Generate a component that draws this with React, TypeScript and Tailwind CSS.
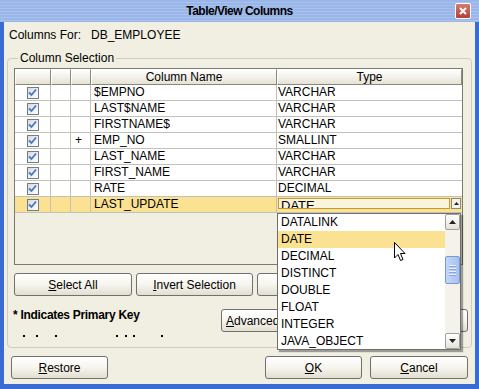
import React from 'react';

const rows = [
  { name: '$EMPNO', type: 'VARCHAR', key: '' },
  { name: 'LAST$NAME', type: 'VARCHAR', key: '' },
  { name: 'FIRSTNAME$', type: 'VARCHAR', key: '' },
  { name: 'EMP_NO', type: 'SMALLINT', key: '+' },
  { name: 'LAST_NAME', type: 'VARCHAR', key: '' },
  { name: 'FIRST_NAME', type: 'VARCHAR', key: '' },
  { name: 'RATE', type: 'DECIMAL', key: '' },
  { name: 'LAST_UPDATE', type: 'DATE', key: '', selected: true },
];

const types = ['DATALINK', 'DATE', 'DECIMAL', 'DISTINCT', 'DOUBLE', 'FLOAT', 'INTEGER', 'JAVA_OBJECT'];

function Check() {
  return (
    <div className="w-[12px] h-[12px] border border-[#6e7d8e] bg-gradient-to-br from-[#dcdcd4] to-white flex items-center justify-center">
      <svg width="9" height="9" viewBox="0 0 9 9">
        <path d="M1 4.5 L3.5 7 L8 1.5" fill="none" stroke="#4a74c8" strokeWidth="1.8" />
      </svg>
    </div>
  );
}

function Btn({ children, className = '' }: { children?: React.ReactNode; className?: string }) {
  return (
    <div
      className={`h-[23px] flex items-center justify-center rounded-[3px] border border-[#707070] bg-gradient-to-b from-white via-[#f6f5ee] to-[#e2dfd0] text-[12px] text-black ${className}`}
    >
      {children}
    </div>
  );
}

function Arrow({ up }: { up?: boolean }) {
  return (
    <div className="w-[15px] h-[16px] border border-[#a0a0a0] rounded-[2px] bg-gradient-to-b from-white to-[#e4e2d8] flex items-center justify-center">
      <svg width="7" height="4" viewBox="0 0 7 4">
        <path d={up ? 'M0 4 L3.5 0 L7 4 Z' : 'M0 0 L3.5 4 L7 0 Z'} fill="#222" />
      </svg>
    </div>
  );
}

export default function App() {
  return (
    <div className="relative w-[479px] h-[389px] flex flex-col bg-[#3a6bd2] font-['Liberation_Sans',Arial,sans-serif] text-black overflow-hidden select-none">
      {/* Title bar */}
      <div className="relative h-[22px] shrink-0 flex items-center justify-center bg-[repeating-linear-gradient(180deg,#9ab6e8_0px,#9ab6e8_2px,#a9c2ee_2px,#a9c2ee_3px)]">
        <span className="text-[12px] font-bold tracking-[-0.5px]">Table/View Columns</span>
        <div className="absolute right-[8px] top-[3px] w-[16px] h-[16px] rounded-[2px] border border-white bg-gradient-to-b from-[#d97a6a] to-[#b0403a] flex items-center justify-center">
          <svg width="8" height="8" viewBox="0 0 8 8">
            <path d="M1 1 L7 7 M7 1 L1 7" stroke="white" strokeWidth="2" />
          </svg>
        </div>
      </div>

      {/* Body */}
      <div className="flex-1 mx-[4px] mb-[5px] bg-[#f1efe2] flex flex-col">
        <div className="h-[12px] mt-[7px] ml-[5px] text-[12px] leading-[12px] whitespace-pre">Columns For:   DB_EMPLOYEE</div>

        <fieldset className="mx-[3px] mt-[11px] h-[296px] border border-[#cfccbd] rounded-[4px] px-[6px] pt-[4px]">
          <legend className="ml-[4px] px-[2px] text-[12px] leading-[12px]">Column Selection</legend>

          {/* Table */}
          <div className="w-[449px] h-[197px] border border-[#7a7a72] bg-[#f1efe2]">
            <div className="flex h-[16px] text-[12px] leading-[14px]">
              {[
                ['w-[36px]', ''],
                ['w-[20px]', ''],
                ['w-[20px]', ''],
                ['w-[186px]', 'Column Name'],
                ['w-[185px]', 'Type'],
              ].map(([w, t], i) => (
                <div
                  key={i}
                  className={`${w} h-[16px] text-center border-t border-l border-t-white border-l-white border-r border-b border-r-[#8a8878] border-b-[#8a8878] bg-gradient-to-b from-white to-[#e6e3d4]`}
                >
                  {t}
                </div>
              ))}
            </div>
            {rows.map((r, i) => (
              <div
                key={i}
                className={`flex h-[16px] text-[12px] leading-[15px] ${r.selected ? 'bg-[#fae292]' : 'bg-white'}`}
              >
                <div className="w-[36px] h-[16px] border-r border-b border-[#c4c2b8] flex items-center justify-center">
                  <Check />
                </div>
                <div className="w-[20px] h-[16px] border-r border-b border-[#c4c2b8]" />
                <div className="w-[20px] h-[16px] border-r border-b border-[#c4c2b8] pl-[4px]">{r.key}</div>
                <div className="w-[186px] h-[16px] border-r border-b border-[#c4c2b8] pl-[3px]">{r.name}</div>
                <div className="w-[185px] h-[16px] border-b border-[#c4c2b8] pl-[1px]">
                  {r.selected ? (
                    <div className="flex items-start pt-[1px] pr-[1px]">
                      <div className="w-[172px] h-[11px] border border-[#c49a2c] bg-[#f8f4de] overflow-hidden pl-[2px] text-[13px] leading-[14px]">
                        {r.type}
                      </div>
                      <div className="ml-[1px] w-[10px] h-[11px] border border-[#888] bg-[#f4f2ea] flex items-center justify-center">
                        <svg width="5" height="3" viewBox="0 0 5 3">
                          <path d="M0 3 L2.5 0 L5 3 Z" fill="#222" />
                        </svg>
                      </div>
                    </div>
                  ) : (
                    r.type
                  )}
                </div>
              </div>
            ))}
          </div>

          {/* Selection buttons */}
          <div className="flex gap-[4px] mt-[8px]">
            <Btn className="w-[118px]"><span><span className="underline">S</span>elect All</span></Btn>
            <Btn className="w-[117px]"><span><span className="underline">I</span>nvert Selection</span></Btn>
            <Btn className="w-[117px]" />
          </div>

          <div className="flex mt-[13px]">
            <div className="flex flex-col">
              <div className="text-[12px] leading-[14px] font-bold tracking-[-0.3px] -ml-[1px] mt-[-1px]">* Indicates Primary Key</div>
              <div className="flex h-[2px] mt-[13px]">
                {[9, 11, 17, 59, 7, 6, 26].map((g, i) => (
                  <span key={i} className="w-[2px] h-[2px] bg-black" style={{ marginLeft: g }} />
                ))}
              </div>
            </div>
            <Btn className="ml-auto mr-[-3px] w-[247px] justify-start pl-[4px]">
              <span><span className="underline">A</span>dvanced</span>
            </Btn>
          </div>
        </fieldset>

        {/* Bottom buttons */}
        <div className="flex mt-[8px] px-[7px]">
          <Btn className="w-[97px]"><span><span className="underline">R</span>estore</span></Btn>
          <Btn className="ml-auto w-[97px]"><span><span className="underline">O</span>K</span></Btn>
          <Btn className="ml-[8px] w-[98px]"><span><span className="underline">C</span>ancel</span></Btn>
        </div>
      </div>

      {/* Dropdown list */}
      <div className="absolute left-[277px] top-[213px] w-[184px] h-[137px] border border-[#6e6e6e] bg-white flex shadow-[2px_2px_1px_rgba(0,0,0,0.35)]">
        <div className="flex-1 flex flex-col">
          {types.map((t, i) => (
            <div
              key={t}
              className={`h-[17px] text-[12px] leading-[17px] pl-[3px] ${i === 1 ? 'bg-[#fae292]' : ''}`}
            >
              {t}
            </div>
          ))}
        </div>
        <div className="w-[15px] flex flex-col bg-[#f4f2ea]">
          <Arrow up />
          <div className="flex-1 relative">
            <div className="absolute left-0 top-[26px] w-[15px] h-[28px] rounded-[2px] border border-[#7a98d8] bg-gradient-to-r from-[#c4d6f8] to-[#a8c2ee] flex flex-col items-center justify-center gap-[2px]">
              {[0, 1, 2, 3].map(i => (
                <div key={i} className="w-[7px] h-[1px] bg-[#e8f0ff] shadow-[0_1px_0_#8aa6dc]" />
              ))}
            </div>
          </div>
          <Arrow />
        </div>
      </div>

      {/* Mouse cursor */}
      <svg className="absolute left-[394px] top-[242px]" width="12" height="20" viewBox="0 0 12 20">
        <path d="M0.5 0.5 L0.5 16 L4 12.5 L6.5 18.5 L9 17.5 L6.5 11.5 L11 11.5 Z" fill="white" stroke="black" strokeWidth="1" />
      </svg>
    </div>
  );
}
